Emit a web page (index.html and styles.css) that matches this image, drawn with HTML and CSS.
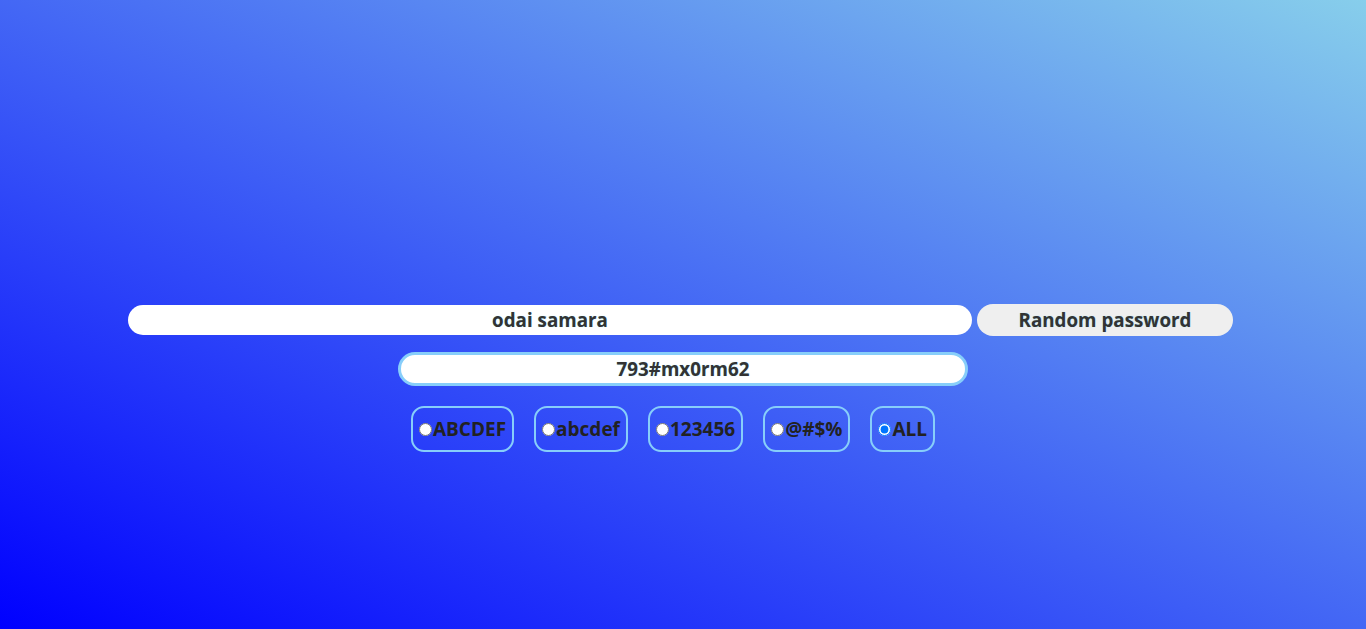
FILE: index.html
```html
<!DOCTYPE html>
<html>
<head>
<meta charset="utf-8">
<link rel="stylesheet" href="styles.css">
</head>
<body>
<main class="app">
  <div class="row top">
    <input class="name" type="text" value="odai samara">
    <button class="gen">Random password</button>
  </div>
  <div class="row">
    <input class="pass" type="text" value="793#mx0rm62">
  </div>
  <div class="row opts">
    <label class="opt"><input type="radio" name="t">ABCDEF</label>
    <label class="opt"><input type="radio" name="t">abcdef</label>
    <label class="opt"><input type="radio" name="t">123456</label>
    <label class="opt"><input type="radio" name="t">@#$%</label>
    <label class="opt"><input type="radio" name="t" checked>ALL</label>
  </div>
</main>
</body>
</html>
```
FILE: styles.css
```css
html, body {
  margin: 0;
  height: 100%;
}
body {
  background: linear-gradient(to top right, #0000ff, #87ceeb);
  font-family: "Open Sans", "Noto Sans", sans-serif;
  overflow: hidden;
}
.app {
  padding-top: 304px;
  display: flex;
  flex-direction: column;
  gap: 16px;
}
.row {
  display: flex;
  justify-content: center;
  align-items: center;
}
.top {
  gap: 5px;
  padding-right: 5px;
}
input[type=text], .gen {
  font-family: inherit;
  font-weight: 700;
  font-size: 18.8px;
  color: #333;
  text-align: center;
  text-shadow: 0 0 1px rgba(0, 200, 255, 0.4);
  box-sizing: border-box;
  outline: none;
}
.name {
  width: 844px;
  height: 30px;
  border: none;
  border-radius: 15px;
  background: #fff;
}
.gen {
  width: 256px;
  height: 32px;
  border: none;
  border-radius: 16px;
  background: #efefef;
  padding: 0;
}
.pass {
  width: 570px;
  height: 34px;
  border: 3px solid #87cefa;
  border-radius: 17px;
  background: #fff;
}
.opts {
  gap: 20px;
  padding-right: 20px;
  margin-top: 4px;
}
.opt {
  display: flex;
  align-items: center;
  border: 2px solid #87cefa;
  border-radius: 13px;
  padding: 0 6px;
  height: 46px;
  box-sizing: border-box;
  font-weight: 700;
  font-size: 19px;
  color: #222;
}
.opt input {
  margin: 0 1px 0 0;
  width: 13px;
  height: 13px;
}
```
